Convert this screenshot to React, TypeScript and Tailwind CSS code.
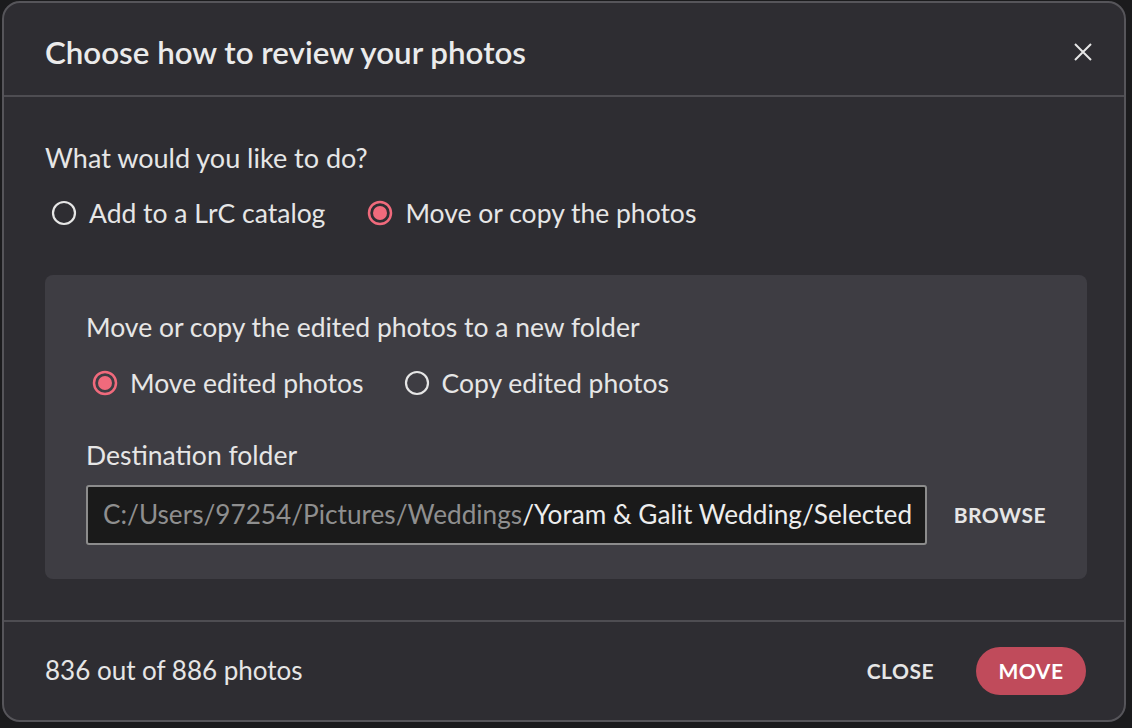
import React, { useState } from 'react';

function Radio({ checked }: { checked: boolean }) {
  return (
    <svg width="26" height="26" viewBox="0 0 26 26" className="shrink-0">
      {checked ? (
        <>
          <circle cx="13" cy="13" r="11" fill="none" stroke="#f06a7c" strokeWidth="2.5" />
          <circle cx="13" cy="13" r="7" fill="#f06a7c" />
        </>
      ) : (
        <circle cx="13" cy="13" r="11" fill="none" stroke="#e6e6e6" strokeWidth="2.2" />
      )}
    </svg>
  );
}

function Option({ label, checked, onClick }: { label: string; checked: boolean; onClick: () => void }) {
  return (
    <button onClick={onClick} className="flex items-center gap-[12px] text-[26.5px] leading-[36px] text-[#e6e6e6]">
      <Radio checked={checked} />
      <span>{label}</span>
    </button>
  );
}

export default function App() {
  const [mode, setMode] = useState('move');
  const [action, setAction] = useState('move');

  return (
    <div
      className="w-[1132px] h-[728px] bg-[#1b1b1d] overflow-hidden"
      style={{ fontFamily: 'Lato, "Noto Sans", sans-serif' }}
    >
      <div className="ml-[2px] mt-[1px] w-[1124px] h-[721px] bg-[#2e2d32] border-2 border-[#56555a] rounded-[18px] flex flex-col">
        {/* Header */}
        <div className="h-[94px] flex items-center justify-between pl-[41px] pr-[32px] pt-[5px] border-b-2 border-[#4e4d52]">
          <h1 className="text-[31.3px] leading-[40px] font-semibold text-[#ebebeb]">Choose how to review your photos</h1>
          <svg width="18" height="18" viewBox="0 0 18 18">
            <path d="M1 1L17 17M17 1L1 17" stroke="#e6e6e6" strokeWidth="2" />
          </svg>
        </div>

        {/* Body */}
        <div className="flex-1 pl-[41px] pr-[37px] pt-[43px]">
          <div className="text-[27px] leading-[36px] text-[#e6e6e6]">What would you like to do?</div>
          <div className="flex gap-[42px] mt-[19px] pl-[6px]">
            <Option label="Add to a LrC catalog" checked={mode === 'catalog'} onClick={() => setMode('catalog')} />
            <Option label="Move or copy the photos" checked={mode === 'move'} onClick={() => setMode('move')} />
          </div>

          <div className="mt-[44px] bg-[#3e3d43] rounded-[8px] px-[41px] pt-[34px] pb-[34px]">
            <div className="text-[26.5px] leading-[36px] text-[#e6e6e6]">Move or copy the edited photos to a new folder</div>
            <div className="flex gap-[40px] mt-[20px] pl-[6px]">
              <Option label="Move edited photos" checked={action === 'move'} onClick={() => setAction('move')} />
              <Option label="Copy edited photos" checked={action === 'copy'} onClick={() => setAction('copy')} />
            </div>
            <div className="text-[26.5px] leading-[36px] text-[#e6e6e6] mt-[36px]">Destination folder</div>
            <div className="flex items-center mt-[12px]">
              <div className="w-[843px] h-[60px] bg-[#1a1a1a] border-2 border-[#8c8c8c] rounded-[3px] flex items-center px-[15px] text-[26.2px] whitespace-nowrap overflow-hidden">
                <span className="text-[#8f8f8f]">C:/Users/97254/Pictures/Weddings</span>
                <span className="text-[#ededed]">/Yoram &amp; Galit Wedding/Selected</span>
              </div>
              <button className="ml-[27px] text-[21px] font-bold text-[#e6e6e6] tracking-[0.5px]">BROWSE</button>
            </div>
          </div>
        </div>

        {/* Footer */}
        <div className="h-[100px] border-t-2 border-[#4e4d52] flex items-center justify-between pl-[41px] pr-[38px]">
          <div className="text-[26px] leading-[36px] text-[#e6e6e6] -mt-[2px]">836 out of 886 photos</div>
          <div className="flex items-center gap-[42px]">
            <button className="text-[21px] font-bold text-[#e6e6e6] tracking-[0.5px]">CLOSE</button>
            <button className="w-[110px] h-[48px] rounded-full bg-[#c04b5b] text-[21px] font-bold text-white tracking-[0.5px]">MOVE</button>
          </div>
        </div>
      </div>
    </div>
  );
}
